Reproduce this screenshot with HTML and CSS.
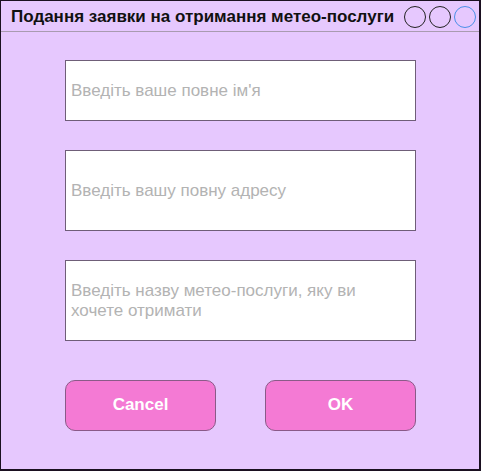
FILE: index.html
```html
<!DOCTYPE html>
<html lang="uk">
<head>
<meta charset="utf-8">
<title>Подання заявки</title>
<link rel="stylesheet" href="styles.css">
</head>
<body>
<div class="window">
  <div class="titlebar">
    <span class="title">Подання заявки на отримання метео-послуги</span>
    <div class="controls">
      <span class="dot"></span>
      <span class="dot"></span>
      <span class="dot dot-blue"></span>
    </div>
  </div>
  <div class="content">
    <div class="field field-short">Введіть ваше повне ім'я</div>
    <div class="field field-tall">Введіть вашу повну адресу</div>
    <div class="field field-tall">Введіть назву метео-послуги, яку ви хочете отримати</div>
    <div class="buttons">
      <button class="btn">Cancel</button>
      <button class="btn">OK</button>
    </div>
  </div>
</div>
</body>
</html>
```
FILE: styles.css
```css
* { box-sizing: border-box; }
html, body { margin: 0; padding: 0; }
body {
  font-family: "Liberation Sans", Arial, sans-serif;
  background: #e6c8fe;
}
.window {
  width: 481px;
  height: 471px;
  background: #e6c8fe;
  border-style: solid;
  border-color: #1a1020;
  border-width: 1px 2px 2px 1px;
  display: flex;
  flex-direction: column;
}
.titlebar {
  height: 31px;
  border-bottom: 1px solid #a99bb0;
  display: flex;
  align-items: center;
  justify-content: space-between;
  padding: 2px 3px 0 10px;
}
.title {
  font-weight: bold;
  font-size: 17px;
  color: #111;
}
.controls {
  display: flex;
  gap: 3px;
}
.dot {
  width: 22px;
  height: 22px;
  border-radius: 50%;
  border: 1px solid #222;
}
.dot-blue { border-color: #4a90e8; }
.content {
  padding: 28px 0 0 64px;
  display: flex;
  flex-direction: column;
}
.field {
  width: 351px;
  background: #fff;
  border: 1px solid #6f5e78;
  color: #b3b3b3;
  font-size: 17px;
  line-height: 20px;
  padding: 0 40px 0 5px;
  display: flex;
  align-items: center;
}
.field-short { height: 61px; }
.field-tall { height: 81px; margin-top: 29px; }
.buttons {
  margin-top: 39px;
  width: 351px;
  display: flex;
  justify-content: space-between;
}
.btn {
  width: 151px;
  height: 51px;
  background: #f47ad4;
  border: 1px solid #8a5a88;
  border-radius: 10px;
  color: #fff;
  font-family: "Liberation Sans", Arial, sans-serif;
  font-weight: bold;
  font-size: 17px;
  padding: 0 0 2px;
}
```
